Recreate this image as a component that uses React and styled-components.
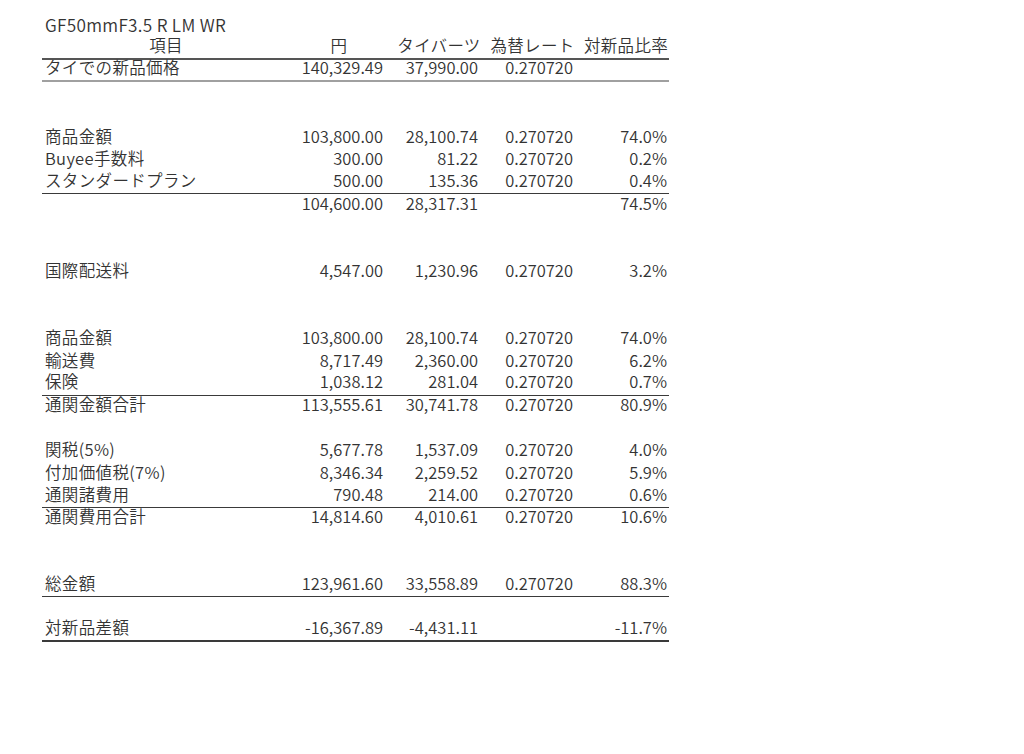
import React from "react";
import styled, { createGlobalStyle } from "styled-components";

const Global = createGlobalStyle`
  html, body { margin: 0; padding: 0; background: #fff; }
  body {
    font-family: "Noto Sans CJK JP", "Noto Sans", sans-serif;
    color: #333;
  }
`;

const Page = styled.div`
  width: 1024px;
  height: 754px;
  box-sizing: border-box;
  padding: 13px 0 0 42px;
  background: #fff;
`;

const Title = styled.div`
  height: 24.2px;
  display: flex;
  align-items: center;
  font-size: 17.2px;
  font-weight: 350;
  line-height: 18px;
  padding-left: 3px;
  padding-bottom: 1px;
  box-sizing: border-box;
  letter-spacing: 0.3px;
  white-space: nowrap;
`;

const Table = styled.div`
  width: 627px;
  display: flex;
  flex-direction: column;
`;

const borders = {
  none: "none",
  thick: "2px solid #555",
  gray: "2px solid #a0a0a0",
  thin: "1px solid #3a3a3a",
  double: "2px solid #3a3a3a",
};

const Row = styled.div`
  display: grid;
  grid-template-columns: 248px 98px 94px 95px 92px;
  align-items: center;
  height: 22.42px;
  box-sizing: border-box;
  padding-bottom: 5px;
  border-bottom: ${(p) => borders[p.$border || "none"]};
  font-size: 16.5px;
  font-weight: 350;
  line-height: 14px;
  white-space: nowrap;
`;

const Label = styled.div`
  padding-left: 3px;
  letter-spacing: 0.35px;
`;

const Num = styled.div`
  text-align: right;
  padding-right: ${(p) => p.$pr}px;
`;

const Head = styled.div`
  text-align: center;
  letter-spacing: 0.3px;
  padding-left: ${(p) => p.$pl || 0}px;
`;

const R = "0.270720";

const rows = [
  { l: "タイでの新品価格", y: "140,329.49", b: "37,990.00", r: R, p: "", border: "gray" },
  {},
  {},
  { l: "商品金額", y: "103,800.00", b: "28,100.74", r: R, p: "74.0%" },
  { l: "Buyee手数料", y: "300.00", b: "81.22", r: R, p: "0.2%" },
  { l: "スタンダードプラン", y: "500.00", b: "135.36", r: R, p: "0.4%", border: "thin" },
  { l: "", y: "104,600.00", b: "28,317.31", r: "", p: "74.5%" },
  {},
  {},
  { l: "国際配送料", y: "4,547.00", b: "1,230.96", r: R, p: "3.2%" },
  {},
  {},
  { l: "商品金額", y: "103,800.00", b: "28,100.74", r: R, p: "74.0%" },
  { l: "輸送費", y: "8,717.49", b: "2,360.00", r: R, p: "6.2%" },
  { l: "保険", y: "1,038.12", b: "281.04", r: R, p: "0.7%", border: "thin" },
  { l: "通関金額合計", y: "113,555.61", b: "30,741.78", r: R, p: "80.9%" },
  {},
  { l: "関税(5%)", y: "5,677.78", b: "1,537.09", r: R, p: "4.0%" },
  { l: "付加価値税(7%)", y: "8,346.34", b: "2,259.52", r: R, p: "5.9%" },
  { l: "通関諸費用", y: "790.48", b: "214.00", r: R, p: "0.6%", border: "thin" },
  { l: "通関費用合計", y: "14,814.60", b: "4,010.61", r: R, p: "10.6%" },
  {},
  {},
  { l: "総金額", y: "123,961.60", b: "33,558.89", r: R, p: "88.3%", border: "thin" },
  {},
  { l: "対新品差額", y: "-16,367.89", b: "-4,431.11", r: "", p: "-11.7%", border: "double" },
];

export default function App() {
  return (
    <>
      <Global />
      <Page>
        <Title>GF50mmF3.5 R LM WR</Title>
        <Table>
          <Row $border="thick">
            <Head>項目</Head>
            <Head>円</Head>
            <Head $pl={8}>タイバーツ</Head>
            <Head $pl={6}>為替レート</Head>
            <Head $pl={6}>対新品比率</Head>
          </Row>
          {rows.map((row, i) => (
            <Row key={i} $border={row.border}>
              <Label>{row.l}</Label>
              <Num $pr={5}>{row.y}</Num>
              <Num $pr={4}>{row.b}</Num>
              <Num $pr={4}>{row.r}</Num>
              <Num $pr={2}>{row.p}</Num>
            </Row>
          ))}
        </Table>
      </Page>
    </>
  );
}
